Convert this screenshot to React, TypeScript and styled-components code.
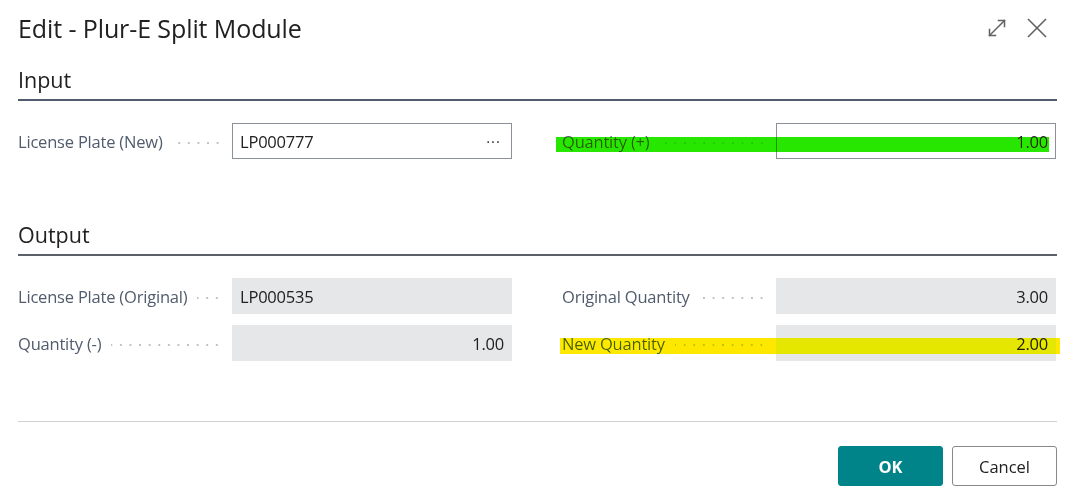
import React from "react";
import styled, { createGlobalStyle } from "styled-components";

const Global = createGlobalStyle`
  html, body { margin: 0; padding: 0; background: #ffffff; }
  body { font-family: "Open Sans", "Noto Sans", "Liberation Sans", sans-serif; color: #212121; }
  * { box-sizing: border-box; }
`;

const Dialog = styled.div`
  width: 1081px;
  height: 491px;
  padding: 13px 24px 0 18px;
  display: flex;
  flex-direction: column;
  background: #fff;
`;

const Header = styled.div`
  display: flex;
  align-items: center;
  justify-content: space-between;
  height: 30px;
`;

const Title = styled.h1`
  margin: 0;
  font-size: 25px;
  font-weight: 400;
  line-height: 30px;
  color: #212121;
  letter-spacing: -0.1px;
`;

const HeaderIcons = styled.div`
  display: flex;
  align-items: center;
  gap: 18px;
  margin-right: 9px;
  color: #616161;
`;

const IconButton = styled.span`
  display: inline-flex;
  width: 22px;
  height: 22px;
  align-items: center;
  justify-content: center;
`;

const Section = styled.section<{ $top: number }>`
  margin-top: ${(p) => p.$top}px;
`;

const SectionHeading = styled.h2<{ $rule: string }>`
  margin: 0;
  font-size: 21.5px;
  font-weight: 400;
  line-height: 28px;
  padding-bottom: 5px;
  border-bottom: 2px solid ${(p) => p.$rule};
  color: #212121;
`;

const FieldGrid = styled.div`
  display: grid;
  grid-template-columns: 494px 495px;
  column-gap: 50px;
  row-gap: 11px;
  margin-top: 22px;
`;

const FieldRow = styled.div`
  position: relative;
  display: grid;
  grid-template-columns: 214px 280px;
  align-items: center;
  height: 36px;
`;

const LabelCell = styled.div`
  display: flex;
  align-items: center;
  padding-right: 10px;
  min-width: 0;
`;

const Label = styled.span`
  font-size: 16.5px;
  color: #505c6d;
  white-space: nowrap;
  letter-spacing: -0.2px;
`;

const Leader = styled.span`
  flex: 1;
  height: 4px;
  margin-left: 10px;
  margin-top: 4px;
  background-image: radial-gradient(circle, #bfc2c6 0.8px, transparent 1.1px);
  background-size: 9.6px 4px;
  background-repeat: repeat-x;
  background-position: right center;
`;

const Field = styled.div<{ $readonly?: boolean; $align?: "left" | "right" }>`
  height: 36px;
  display: flex;
  align-items: center;
  justify-content: ${(p) => (p.$align === "right" ? "flex-end" : "space-between")};
  padding: 0 7px;
  font-size: 16.5px;
  letter-spacing: -0.2px;
  color: #212121;
  background: ${(p) => (p.$readonly ? "#e6e7e9" : "#ffffff")};
  border: 1px solid ${(p) => (p.$readonly ? "#e6e7e9" : "#8a8f98")};
`;

const Ellipsis = styled.span`
  font-size: 15px;
  letter-spacing: 1px;
  color: #3a3a3a;
  margin-right: 3px;
  margin-top: -1px;
`;

const Highlight = styled.span<{ $color: string; $left: number; $top: number; $width: number; $height: number }>`
  position: absolute;
  left: ${(p) => p.$left}px;
  top: ${(p) => p.$top}px;
  width: ${(p) => p.$width}px;
  height: ${(p) => p.$height}px;
  background: ${(p) => p.$color};
  mix-blend-mode: darken;
  pointer-events: none;
`;

const Footer = styled.footer`
  margin-top: 60px;
  border-top: 1px solid #d1d1d1;
  padding-top: 24px;
  display: flex;
  justify-content: flex-end;
  gap: 9px;
`;

const Button = styled.button<{ $primary?: boolean }>`
  width: 105px;
  height: 40px;
  border-radius: 3px;
  font-family: inherit;
  font-size: 16.5px;
  font-weight: ${(p) => (p.$primary ? 700 : 400)};
  color: ${(p) => (p.$primary ? "#ffffff" : "#212121")};
  background: ${(p) => (p.$primary ? "#008489" : "#ffffff")};
  border: 1px solid ${(p) => (p.$primary ? "#008489" : "#8a8886")};
  cursor: pointer;
`;

type FieldProps = {
  label: string;
  value: string;
  readonly?: boolean;
  align?: "left" | "right";
  lookup?: boolean;
  highlight?: { color: string; left: number; top: number; width: number; height: number };
};

function FormField({ label, value, readonly, align, lookup, highlight }: FieldProps) {
  return (
    <FieldRow>
      <LabelCell>
        <Label>{label}</Label>
        <Leader />
      </LabelCell>
      <Field $readonly={readonly} $align={align}>
        <span>{value}</span>
        {lookup && <Ellipsis>···</Ellipsis>}
      </Field>
      {highlight && (
        <Highlight
          $color={highlight.color}
          $left={highlight.left}
          $top={highlight.top}
          $width={highlight.width}
          $height={highlight.height}
        />
      )}
    </FieldRow>
  );
}

const ExpandIcon = () => (
  <svg width="22" height="22" viewBox="0 0 22 22" fill="none" stroke="currentColor" strokeWidth="1.5" strokeLinecap="square">
    <path d="M3.5 18.5 L18.5 3.5" />
    <path d="M12.5 3.5 H18.5 V9.5" />
    <path d="M3.5 12.5 V18.5 H9.5" />
  </svg>
);

const CloseIcon = () => (
  <svg width="22" height="22" viewBox="0 0 22 22" fill="none" stroke="currentColor" strokeWidth="1.6">
    <path d="M2 2 L20 20" />
    <path d="M20 2 L2 20" />
  </svg>
);

export default function App() {
  return (
    <>
      <Global />
      <Dialog>
        <Header>
          <Title>Edit - Plur-E Split Module</Title>
          <HeaderIcons>
            <IconButton><ExpandIcon /></IconButton>
            <IconButton><CloseIcon /></IconButton>
          </HeaderIcons>
        </Header>

        <Section $top={23}>
          <SectionHeading $rule="#505c6d">Input</SectionHeading>
          <FieldGrid>
            <FormField label="License Plate (New)" value="LP000777" lookup />
            <FormField
              label="Quantity (+)"
              value="1.00"
              align="right"
              highlight={{ color: "#27e600", left: -6, top: 14, width: 493, height: 15 }}
            />
          </FieldGrid>
        </Section>

        <Section $top={62}>
          <SectionHeading $rule="#5a616b">Output</SectionHeading>
          <FieldGrid>
            <FormField label="License Plate (Original)" value="LP000535" readonly />
            <FormField label="Original Quantity" value="3.00" readonly align="right" />
            <FormField label="Quantity (-)" value="1.00" readonly align="right" />
            <FormField
              label="New Quantity"
              value="2.00"
              readonly
              align="right"
              highlight={{ color: "#ffe800", left: -2, top: 13, width: 500, height: 16 }}
            />
          </FieldGrid>
        </Section>

        <Footer>
          <Button $primary>OK</Button>
          <Button>Cancel</Button>
        </Footer>
      </Dialog>
    </>
  );
}
